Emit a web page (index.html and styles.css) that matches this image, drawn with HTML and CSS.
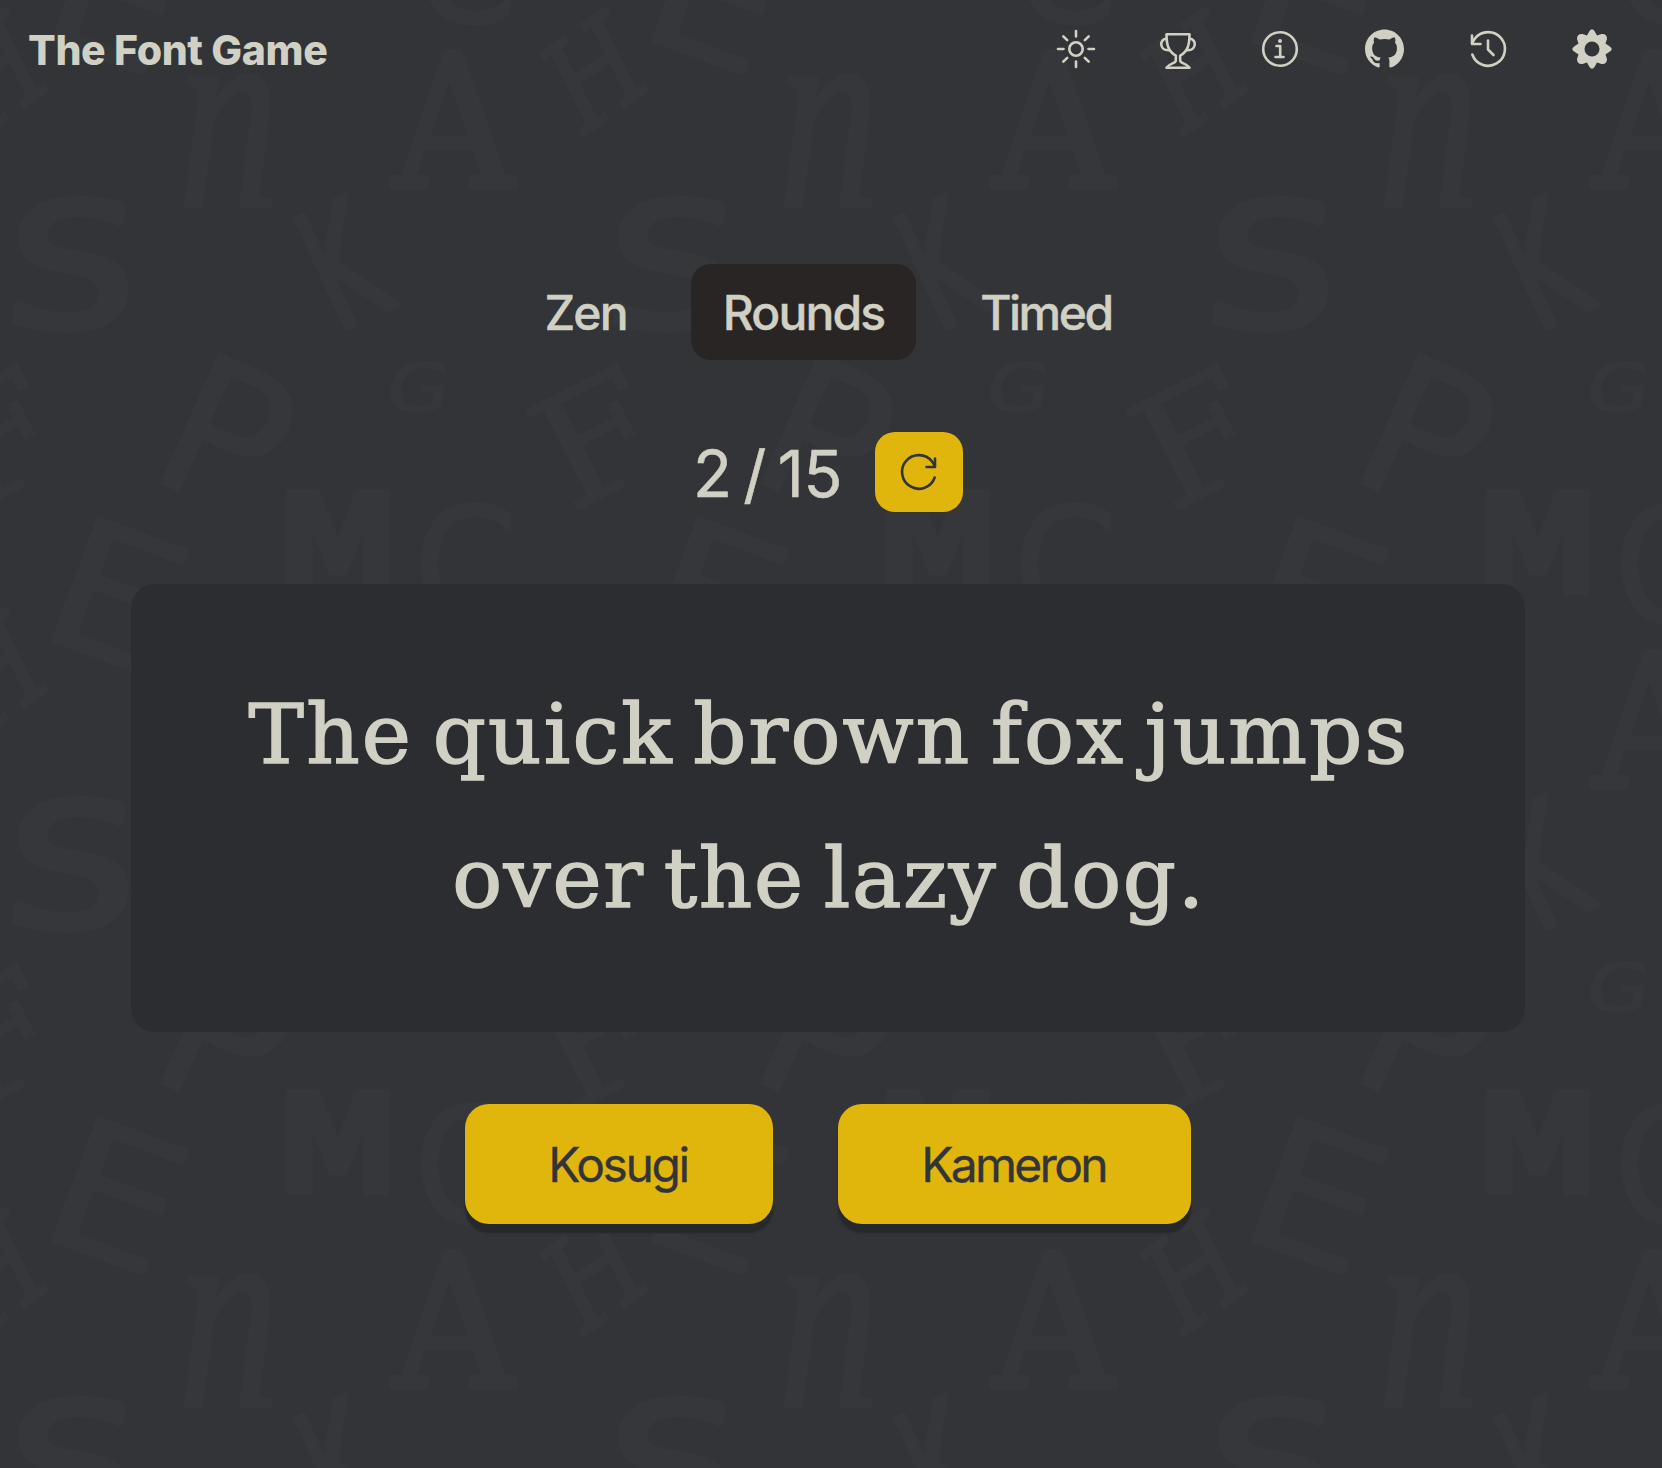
FILE: index.html
```html
<!DOCTYPE html>
<html lang="en">
<head>
<meta charset="utf-8">
<title>The Font Game</title>
<link rel="stylesheet" href="styles.css">
</head>
<body>
<svg class="backdrop" aria-hidden="true">
  <defs>
    <pattern id="letters" width="600" height="600" patternUnits="userSpaceOnUse">
      <text class="serif-italic" font-size="278" x="-4" stroke-width="3" transform="translate(181 206) scale(.73 1)">n</text>
      <text class="slab" font-size="186" stroke-width="5" transform="translate(393 187) scale(.9 1)">A</text>
      <text class="sans" font-size="172" x="-9" stroke-width="7" transform="translate(13 327) skewX(-4) scale(1.2 1)">S</text>
      <text class="sans" font-size="166" x="-16" stroke-width="5" transform="translate(346 329) rotate(-25) scale(.61 1)">K</text>
      <text class="sans" font-size="195" x="-19" stroke-width="1" transform="translate(161 483) rotate(24) scale(1.02 1)">P</text>
      <text class="sans" font-size="66" x="-4" stroke-width="1" transform="translate(388 411) skewX(-10) scale(1.22 1)">G</text>
      <text id="f" class="slab" font-size="154" x="-8" stroke-width="1" transform="translate(577 510) rotate(-27) scale(1.1 1)">F</text>
      <use href="#f" x="-600"/>
      <text class="sans heavy" font-size="138" x="-12" stroke-width="5" transform="translate(288 592) scale(.88 1)">M</text>
      <text id="c" class="sans" font-size="161" x="-9" stroke-width="1" transform="translate(422 623) scale(.93 1)">C</text>
      <use href="#c" y="-600"/>
      <text id="e" class="sans" font-size="182" x="-18" transform="translate(52 641) rotate(20.500) scale(1.150 1)">E</text>
      <use href="#e" y="-600"/>
      <text id="h" class="slab" font-size="126" x="-7" stroke-width="3" transform="translate(583 136) rotate(-35) skewX(-8) scale(.82 1)">H</text>
      <use href="#h" x="-600"/>
    </pattern>
  </defs>
  <rect width="100%" height="100%" fill="url(#letters)"/>
</svg>
<div class="page">
  <header class="topbar">
    <h1 class="brand">The Font Game</h1>
    <nav class="tools">
      <svg class="icon sun" viewBox="0 0 40 40"><circle cx="20" cy="20" r="6.700"/><path d="M20 2v5.500M20 32.500v5.500M2 20h5.500M32.500 20h5.500M7.300 7.300l3.900 3.900M28.800 28.800l3.900 3.900M32.700 7.300l-3.900 3.900M11.200 28.800l-3.900 3.900"/></svg>
      <svg class="icon trophy" viewBox="0 0 40 40"><path d="M8.500 5.200h23c0 11-2 17.500-9.300 21.500v5c0 2.800 6.500 2.300 9.300 7h-23c2.800-4.700 9.300-4.200 9.300-7v-5C10.500 22.700 8.500 16.200 8.500 5.200zM8.500 9.800c-7.300 0-7.300 11.400 1.800 11.400M31.500 9.800c7.300 0 7.300 11.400-1.800 11.400"/></svg>
      <svg class="icon info" viewBox="0 0 40 40"><circle cx="20" cy="20" r="16.800"/><path d="M16.500 17h3.700v11M15.500 28h8"/><circle class="solid" cx="20" cy="12" r="2"/></svg>
      <svg class="icon github" viewBox="0 0 16 16"><path class="solid" d="M8 0C3.580 0 0 3.580 0 8c0 3.540 2.290 6.530 5.470 7.590.4.070.55-.17.55-.38 0-.19-.01-.82-.01-1.490-2.010.37-2.530-.49-2.690-.94-.09-.23-.48-.94-.82-1.130-.28-.15-.68-.52-.01-.53.63-.01 1.080.58 1.230.82.720 1.210 1.870.87 2.330.66.070-.52.280-.87.510-1.070-1.780-.2-3.640-.89-3.640-3.950 0-.87.310-1.590.82-2.150-.08-.2-.36-1.020.08-2.120 0 0 .67-.21 2.200.82.640-.18 1.320-.27 2-.27s1.360.09 2 .27c1.530-1.040 2.200-.82 2.200-.82.440 1.100.160 1.920.08 2.120.510.56.82 1.270.82 2.150 0 3.070-1.870 3.750-3.650 3.950.290.250.540.730.540 1.480 0 1.070-.01 1.930-.01 2.200 0 .210.150.460.550.380A8.010 8.010 0 0 0 16 8c0-4.420-3.580-8-8-8z"/></svg>
      <svg class="icon" viewBox="0 0 40 40"><path d="M4.300 25.500A16.800 16.800 0 1 0 7 9.500Q5.200 11.800 4 15M4 6.500v8.500h8.500M20 11.500v9l5.500 5.500"/></svg>
      <svg class="icon" viewBox="0 0 40 40"><path class="solid" fill-rule="evenodd" d="M17.200 2.500Q20-2 22.800 2.500L25 6.500L29.500 5Q35 4.500 35 10L33.500 14.500L37.500 17.200Q42 20 37.500 22.800L33.500 25.500L35 30Q35 35.500 29.500 35L25 33.500L22.800 37.500Q20 42 17.200 37.500L15 33.500L10.500 35Q5 35.500 5 30L6.500 25.500L2.500 22.800Q-2 20 2.500 17.200L6.500 14.500L5 10Q5 4.500 10.500 5L15 6.500ZM20 12.500A7.500 7.500 0 1 0 20 27.500A7.500 7.500 0 1 0 20 12.500Z"/></svg>
    </nav>
  </header>
  <main class="game">
    <div class="modes">
      <button class="mode">Zen</button>
      <button class="mode active">Rounds</button>
      <button class="mode timed">Timed</button>
    </div>
    <div class="progress">
      <span class="count">2 / 15</span>
      <button class="restart" aria-label="Restart"><svg class="icon" viewBox="0 0 40 40"><path d="M35.700 25.500A16.800 16.800 0 1 1 33 9.500Q34.800 11.800 36 15M36 6.500v8.500h-8.500"/></svg></button>
    </div>
    <section class="sample"><p class="line first">The quick brown fox jumps</p><p class="line second">over the lazy dog.</p></section>
    <div class="answers">
      <button class="answer kosugi">Kosugi</button>
      <button class="answer kameron">Kameron</button>
    </div>
  </main>
</div>
</body>
</html>
```
FILE: styles.css
```css
* { box-sizing: border-box; }
body { margin: 0; background: #333438; color: #d0d0c4; font-family: Inter, sans-serif; overflow: hidden; }
button { border: 0; margin: 0; padding: 0; background: none; color: inherit; font: inherit; }
.backdrop { position: absolute; inset: 0; z-index: -1; width: 100%; height: 1468px; }
.backdrop text { fill: #36373b; stroke: #36373b; stroke-linejoin: round; }
.sans { font-family: "DejaVu Sans", sans-serif; }
.slab { font-family: "DejaVu Serif", serif; }
.serif-italic { font-family: "Liberation Serif", serif; font-style: italic; }
.heavy { font-weight: 700; }
.page { width: 1656px; height: 1468px; }
.topbar { display: flex; justify-content: space-between; align-items: center; height: 98px; padding: 0 44px 0 28px; }
.brand { margin: 0; padding-top: 2px; font-size: 41px; font-weight: 800; letter-spacing: -.35px; line-height: 48px; }
.tools { display: flex; gap: 64px; }
.icon { display: block; width: 40px; height: 40px; overflow: visible; fill: none; stroke: #d0d0c4; stroke-width: 2.600; stroke-linecap: round; stroke-linejoin: round; }
.icon .solid { fill: #d0d0c4; stroke: none; }
.sun { margin-right: -2px; }
.trophy { margin-right: -2px; }
.info { margin-right: 1px; }
.github { width: 39px; }
.game { display: flex; flex-direction: column; align-items: center; padding-top: 166px; }
.modes { display: flex; gap: 32px; }
.mode { height: 96px; padding: 0 32px; border-radius: 20px; font-size: 48px; font-weight: 500; letter-spacing: -1.800px; -webkit-text-stroke: .4px #d0d0c4; }
.active { letter-spacing: -1.900px; background: #292524; }
.timed { letter-spacing: -2.500px; }
.progress { display: flex; align-items: center; gap: 33px; margin-top: 72px; height: 80px; }
.count { font-size: 64px; line-height: 80px; letter-spacing: -.3px; word-spacing: -6px; padding-top: 3px; -webkit-text-stroke: .6px #d0d0c4; }
.restart { display: flex; align-items: center; justify-content: center; width: 88px; height: 80px; border-radius: 20px; background: #e0b60d; }
.restart .icon { stroke: #333438; }
.sample { width: 1394px; height: 448px; margin-top: 72px; padding: 79px 0 0 2px; border-radius: 24px; background: #2c2d31; text-align: center; font-family: "DejaVu Serif", serif; font-size: 83px; line-height: 144px; white-space: nowrap; word-spacing: -9px; -webkit-text-stroke: 1.600px #d0d0c4; }
.line { margin: 0; }
.first { letter-spacing: 2.200px; }
.second { letter-spacing: 1.700px; }
.answers { display: flex; gap: 65px; margin-top: 72px; }
.answer { height: 120px; border-radius: 24px; background: #e0b60d; color: #333438; font-size: 48px; padding-right: 2px; box-shadow: 0 9px 2px #26282b; -webkit-text-stroke: .3px #333438; }
.kosugi { width: 308px; letter-spacing: -2.400px; }
.kameron { width: 353px; letter-spacing: -2.700px; }
```
